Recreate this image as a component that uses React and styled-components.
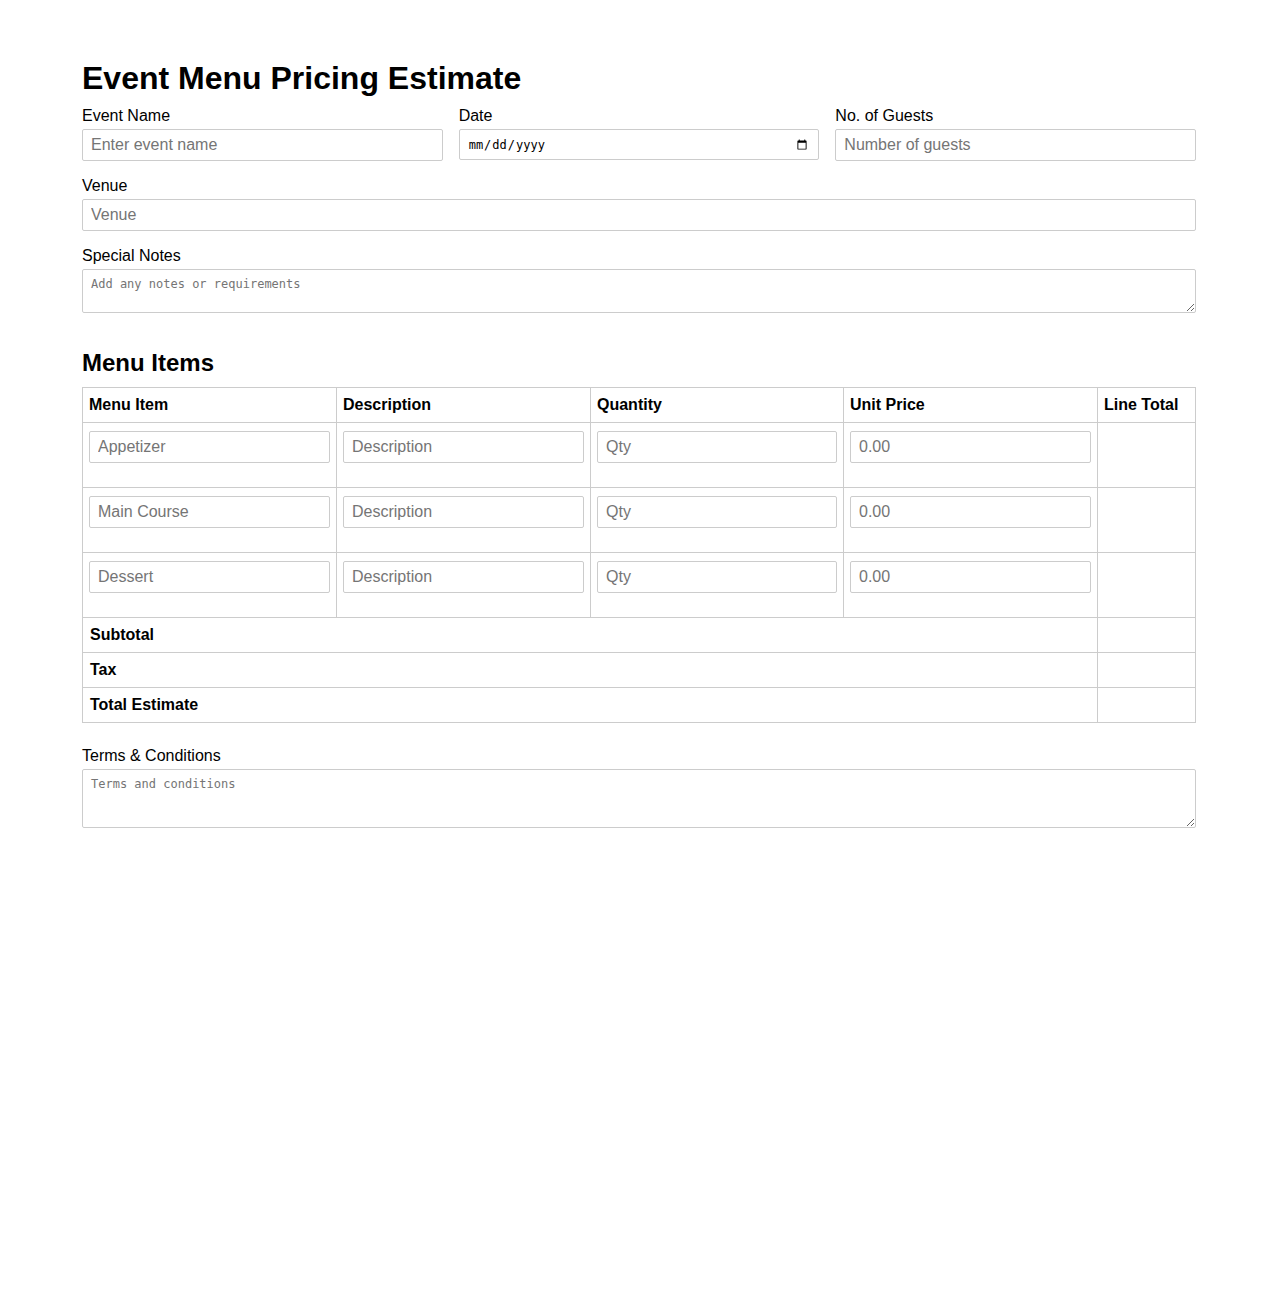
import React from "react";
import styled, { createGlobalStyle } from "styled-components";

const GlobalStyle = createGlobalStyle`
  body {
    margin: 0;
    background: #fff;
    font-family: "Liberation Sans", Arial, sans-serif;
    color: #000;
  }
`;

const Page = styled.div`
  width: 1114px;
  margin: 0 auto;
  padding: 60px 0 40px;
`;

const Title = styled.h1`
  font-size: 32px;
  margin: 0 0 10px;
`;

const SectionTitle = styled.h2`
  font-size: 24px;
  margin: 20px 0 10px;
`;

const Row = styled.div`
  display: grid;
  grid-template-columns: repeat(3, 1fr);
  gap: 16px;
`;

const Field = styled.div`
  display: flex;
  flex-direction: column;
`;

const Label = styled.label`
  font-size: 16px;
  margin-bottom: 4px;
`;

const Input = styled.input`
  box-sizing: border-box;
  width: 100%;
  height: 32px;
  padding: 8px;
  margin: 0 0 16px;
  border: 1px solid #ccc;
  border-radius: 2px;
  font-family: "Liberation Sans", Arial, sans-serif;
  font-size: 16px;
  &::placeholder {
    color: #757575;
  }
`;

const DateInput = styled.input`
  box-sizing: border-box;
  width: 100%;
  height: 31px;
  padding: 6px 8px;
  margin: 0 0 16px;
  border: 1px solid #ccc;
  border-radius: 2px;
  font-family: "DejaVu Sans Mono", monospace;
  font-size: 12px;
`;

const TextArea = styled.textarea`
  box-sizing: border-box;
  width: 100%;
  height: ${(p) => p.$h}px;
  padding: 7px 8px;
  margin: 0 0 16px;
  border: 1px solid #ccc;
  border-radius: 2px;
  display: block;
  font-family: "DejaVu Sans Mono", monospace;
  font-size: 12px;
  &::placeholder {
    color: #757575;
  }
`;

const Table = styled.table`
  width: 100%;
  table-layout: fixed;
  border-collapse: collapse;
  margin-bottom: 24px;
`;

const Th = styled.th`
  box-sizing: border-box;
  border: 1px solid #ccc;
  padding: 8px 6px;
  text-align: left;
  font-size: 16px;
  width: ${(p) => p.$w}px;
`;

const Td = styled.td`
  border: 1px solid #ccc;
  padding: 8px ${(p) => (p.$bold ? 7 : 6)}px;
  vertical-align: top;
  font-size: 16px;
  font-weight: ${(p) => (p.$bold ? "bold" : "normal")};
`;

const items = ["Appetizer", "Main Course", "Dessert"];

export default function App() {
  return (
    <Page>
      <GlobalStyle />
      <Title>Event Menu Pricing Estimate</Title>
      <Row>
        <Field>
          <Label>Event Name</Label>
          <Input type="text" placeholder="Enter event name" />
        </Field>
        <Field>
          <Label>Date</Label>
          <DateInput type="date" />
        </Field>
        <Field>
          <Label>No. of Guests</Label>
          <Input type="number" placeholder="Number of guests" />
        </Field>
      </Row>
      <Field>
        <Label>Venue</Label>
        <Input type="text" placeholder="Venue" />
      </Field>
      <Field>
        <Label>Special Notes</Label>
        <TextArea $h={44} placeholder="Add any notes or requirements" />
      </Field>

      <SectionTitle>Menu Items</SectionTitle>
      <Table>
        <thead>
          <tr>
            <Th $w={254}>Menu Item</Th>
            <Th $w={254}>Description</Th>
            <Th $w={253}>Quantity</Th>
            <Th $w={254}>Unit Price</Th>
            <Th $w={98}>Line Total</Th>
          </tr>
        </thead>
        <tbody>
          {items.map((item) => (
            <tr key={item}>
              <Td>
                <Input type="text" placeholder={item} />
              </Td>
              <Td>
                <Input type="text" placeholder="Description" />
              </Td>
              <Td>
                <Input type="number" placeholder="Qty" />
              </Td>
              <Td>
                <Input type="number" placeholder="0.00" />
              </Td>
              <Td></Td>
            </tr>
          ))}
          <tr>
            <Td $bold colSpan={4}>Subtotal</Td>
            <Td></Td>
          </tr>
          <tr>
            <Td $bold colSpan={4}>Tax</Td>
            <Td></Td>
          </tr>
          <tr>
            <Td $bold colSpan={4}>Total Estimate</Td>
            <Td></Td>
          </tr>
        </tbody>
      </Table>

      <Field>
        <Label>Terms &amp; Conditions</Label>
        <TextArea $h={59} placeholder="Terms and conditions" />
      </Field>
    </Page>
  );
}
